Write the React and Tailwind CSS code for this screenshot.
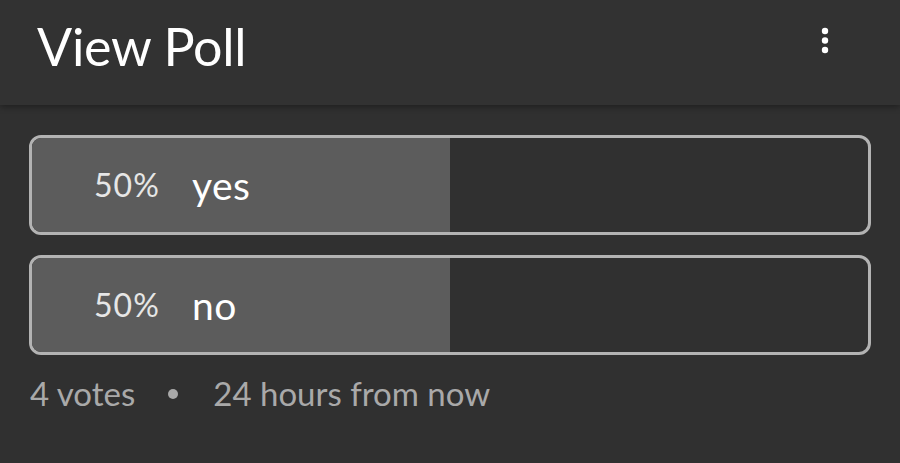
import React from 'react';

const options = [
  { id: 'yes', label: 'yes', pct: 50 },
  { id: 'no', label: 'no', pct: 50 },
];

const PollOption = ({ label, pct }) => (
  <div className="relative h-[100px] rounded-[12px] border-[3px] border-[#b3b3b3] overflow-hidden">
    <div className="absolute inset-y-0 left-0 bg-[#5c5c5c]" style={{ width: `${pct}%` }} />
    <div className="relative h-full flex items-center pl-[62px]">
      <span className="text-[32px] tracking-[1px] text-[#e6e6e6] w-[98px]">{pct}%</span>
      <span className="text-[39px] tracking-[0.4px] text-white">{label}</span>
    </div>
  </div>
);

export default function App() {
  return (
    <div className="w-[900px] h-[463px] bg-[#303030] font-['Lato','Noto_Sans',sans-serif] overflow-hidden">
      <header className="h-[105px] bg-[#323232] shadow-[0_2px_6px_rgba(0,0,0,0.35)] flex items-start justify-between pl-[37px] pr-[70px] relative z-10">
        <h1 className="text-[52px] leading-none text-white mt-[20px] tracking-[-0.3px]">View Poll</h1>
        <svg width="10" height="30" viewBox="0 0 10 30" className="mt-[26px]">
          <circle cx="5" cy="5" r="3.2" fill="#fff" />
          <circle cx="5" cy="14.5" r="3.2" fill="#fff" />
          <circle cx="5" cy="24" r="3.2" fill="#fff" />
        </svg>
      </header>

      <main className="px-[29px] pt-[30px] flex flex-col gap-[20px]">
        {options.map((o) => (
          <PollOption key={o.id} label={o.label} pct={o.pct} />
        ))}
      </main>

      <div className="px-[30px] mt-[14px] flex items-center text-[33px] text-[#a9a9a9]">
        <span>4 votes</span>
        <span className="w-[10px] h-[10px] rounded-full bg-[#a9a9a9] ml-[33px] mr-[35px]" />
        <span>24 hours from now</span>
      </div>
    </div>
  );
}
